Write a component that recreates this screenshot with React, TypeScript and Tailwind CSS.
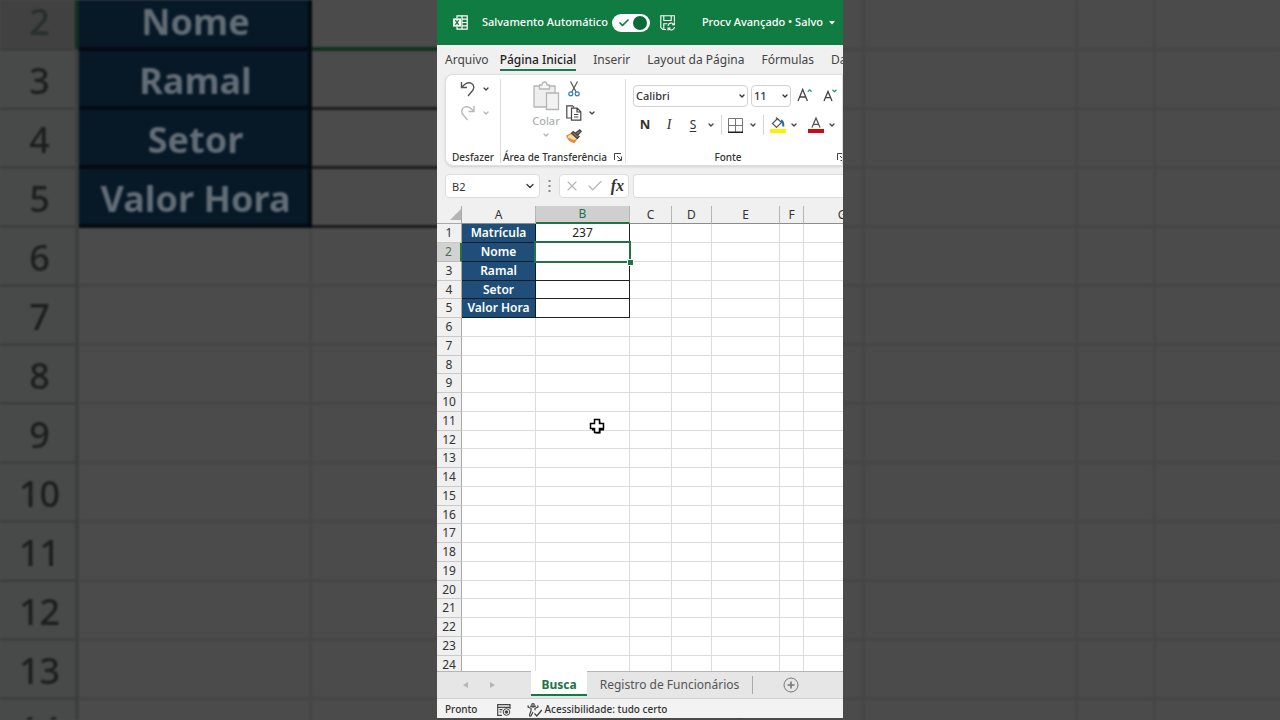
import React from "react";
import { ChevronDown, Check, X } from "lucide-react";

const columns = ["A", "B", "C", "D", "E", "F", "G"];
const labels = ["Matrícula", "Nome", "Ramal", "Setor", "Valor Hora"];
const rows = Array.from({ length: 24 }, (_, i) => i + 1);
const backdropRows = Array.from({ length: 13 }, (_, i) => i + 2);

function Chevron({ light = false, label }: { light?: boolean; label: string }) {
  return (
    <button type="button" aria-label={label} className={light ? "text-[#b5b5b5]" : "text-[#444]"}>
      <ChevronDown size={8} strokeWidth={4} />
    </button>
  );
}

function Launcher({ label }: { label: string }) {
  return (
    <button type="button" aria-label={label} className="shrink-0">
      <svg width="10" height="10" viewBox="0 0 10 10" fill="none" stroke="#444" strokeWidth="1">
        <path d="M1.5 8V1.5H8M4 4l4 4M8.5 4.5v4h-4" />
      </svg>
    </button>
  );
}

function Backdrop() {
  return (
    <div aria-hidden="true" className="col-start-1 row-start-1 h-screen overflow-hidden bg-[#4b4b4b] blur-[1px]">
      <table className="-mt-2 w-[1500px] table-fixed border-separate border-spacing-0 text-[36px] leading-10">
        <colgroup>
          <col className="w-[79px]" />
          <col className="w-[233px]" />
          <col className="w-[298px]" />
          <col className="w-[131px]" />
          <col className="w-[124px]" />
          <col className="w-[213px]" />
          <col className="w-[78px]" />
          <col />
        </colgroup>
        <tbody>
          {backdropRows.map((n) => (
            <tr key={n} className="h-[59px]">
              <th
                className={
                  n === 2
                    ? "border-r-4 border-b-3 border-r-[#10301f] border-b-[#3e3e3e] bg-[#414141] p-0 pt-1 pl-1 font-medium text-[#26302a]"
                    : "border-r-4 border-b-3 border-[#3e3e3e] bg-[#484a4a] p-0 pt-1 pl-1 font-medium text-[#1c1e1e]"
                }
              >
                {n}
              </th>
              {columns.map((c) => {
                if (c === "A" && n <= 5)
                  return (
                    <td key={c} className="border-r-4 border-b-4 border-[#030a12] bg-[#071827] p-0 pt-1 pl-1 text-center font-bold text-[#626d76]">
                      {labels[n - 1]}
                    </td>
                  );
                if (c === "B" && n === 2) return <td key={c} className="border-b-4 border-[#12301f]" />;
                if (c === "B" && n <= 5) return <td key={c} className="border-r-4 border-b-3 border-[#1c1c1c]" />;
                return <td key={c} className="border-r-3 border-b-3 border-[#454545]" />;
              })}
            </tr>
          ))}
        </tbody>
      </table>
    </div>
  );
}

function TitleBar() {
  return (
    <header className="flex h-[45px] shrink-0 items-center bg-[#107c41] pl-4 text-[11px] font-medium text-white">
      <svg width="15" height="15" viewBox="0 0 15 15" fill="none" stroke="white" strokeWidth="1.2" aria-label="Excel" className="shrink-0">
        <path d="M4 3.5V.8h10.2v13.4H4v-2.7M9 .8v13.4M9 4.2h5M9 7.5h5M9 10.8h5" />
        <rect x="0" y="3.4" width="8" height="8.2" fill="white" stroke="none" />
        <path d="M2.3 5.2l3.4 4.6M5.7 5.2L2.3 9.8" stroke="#107c41" strokeWidth="1.3" />
      </svg>
      <label className="ml-3.5 flex shrink-0 items-center whitespace-nowrap">
        Salvamento Automático
        <input type="checkbox" role="switch" defaultChecked className="peer sr-only" />
        <span className="ml-1 flex h-[18px] w-[38px] items-center justify-between rounded-full bg-white px-[3px] pl-1.5 text-[#107c41]">
          <Check size={12} strokeWidth={3.5} />
          <span className="size-3.5 rounded-full bg-[#0b6b37]" />
        </span>
      </label>
      <button type="button" aria-label="Salvar" className="ml-2.5 shrink-0">
        <svg width="16" height="16" viewBox="0 0 16 16" fill="none" stroke="white" strokeWidth="1.1">
          <path d="M6 14.5H2.8L.8 12.6V.8h13.6v6M3.8.8v4.7h7.4V.8M3.8 14V8.8h3.500" />
          <path d="M8 10.8a3.300 3.300 0 0 1 6-1.300M14.500 7.300v2.500H12M14.600 12.200a3.300 3.300 0 0 1-6 1.300M8 15.600v-2.500h2.500" />
        </svg>
      </button>
      <button type="button" className="ml-[26px] flex shrink-0 items-center gap-1.5 whitespace-nowrap">
        Procv Avançado • Salvo
        <svg width="6" height="4" viewBox="0 0 6 4" fill="white"><path d="M0 0h6L3 3.500z" /></svg>
      </button>
    </header>
  );
}

function RibbonTabs() {
  const tabs = ["Arquivo", "Página Inicial", "Inserir", "Layout da Página", "Fórmulas", "Dados"];
  return (
    <nav className="flex h-[29px] shrink-0 items-start gap-[17px] overflow-hidden pt-1.5 pl-2 text-xs text-[#444]">
      {tabs.map((t) => (
        <a
          key={t}
          href="#"
          className={
            t === "Página Inicial"
              ? "-ml-1.5 border-b-2 border-[#1e7a55] leading-[18px] font-medium whitespace-nowrap text-[#222]"
              : "leading-[18px] whitespace-nowrap"
          }
        >
          {t}
        </a>
      ))}
    </nav>
  );
}

function Ribbon() {
  return (
    <section className="ml-2 flex h-[92px] shrink-0 overflow-hidden rounded-l-lg border border-[#dedede] bg-white text-[10px] font-medium text-[#333] shadow-sm">
      <div className="mt-1 mb-0.5 flex w-[55px] shrink-0 flex-col border-r border-[#dcdcdc]">
        <div className="flex flex-1 flex-col gap-2 pt-0.5 pl-3.5">
          <div className="flex items-center gap-1.5">
            <button type="button" aria-label="Desfazer">
              <svg width="16" height="16" viewBox="0 0 16 16" fill="none" stroke="#555" strokeWidth="1.4">
                <path d="M1.500 1v5.500H7M1.800 6.200C5 2.500 8 .8 11 2.200c3.500 1.700 3.600 5.500 1 8L8 15" />
              </svg>
            </button>
            <Chevron label="Opções de desfazer" />
          </div>
          <div className="flex items-center gap-1.5">
            <button type="button" aria-label="Refazer">
              <svg width="16" height="16" viewBox="0 0 16 16" fill="none" stroke="#b9b9b9" strokeWidth="1.400">
                <path d="M14 1v5.500H8.500M13.700 6.200C10.500 2.500 7.500.8 4.500 2.200 1 3.900.9 7.700 3.500 10.200L7.500 15" />
              </svg>
            </button>
            <Chevron light label="Opções de refazer" />
          </div>
        </div>
        <div className="text-center leading-3">Desfazer</div>
      </div>

      <div className="mt-1 mb-0.5 flex w-[125px] shrink-0 flex-col border-r border-[#dcdcdc]">
        <div className="flex flex-1 justify-center gap-1.5 pl-2">
          <div className="flex flex-col items-center pt-0.5 text-[#b0b0b0]">
            <button type="button" className="flex flex-col items-center text-[11px] leading-5">
              <svg width="28" height="30" viewBox="0 0 28 30" fill="#eee" stroke="#b5b5b5" strokeWidth="1.300">
                <path d="M2 5h21v21H2z" />
                <path d="M7.500 8V4h2.500c0-4 5-4 5 0h2.500v4z" fill="#f7f7f7" />
                <path d="M14.500 12h12v16.500h-12z" fill="#f2f2f2" />
              </svg>
              Colar
            </button>
            <Chevron light label="Opções de colar" />
          </div>
          <div className="flex w-9 flex-col gap-2 pt-0.5">
            <button type="button" aria-label="Recortar" className="w-4">
              <svg width="16" height="16" viewBox="0 0 16 16" fill="none" strokeWidth="1.200">
                <path d="M4.500.5l5.800 10.700M11.500.5L5.700 11.200" stroke="#555" />
                <circle cx="4.800" cy="12.800" r="2" stroke="#2f7fc4" />
                <circle cx="11.200" cy="12.800" r="2" stroke="#2f7fc4" />
              </svg>
            </button>
            <div className="flex items-center gap-1.5">
              <button type="button" aria-label="Copiar">
                <svg width="16" height="16" viewBox="0 0 16 16" fill="none" stroke="#444" strokeWidth="1.200">
                  <path d="M5 13H.8V.8h5.700l1.500 1.500" />
                  <path d="M5.500 3.200h5.700l3.600 3.600v8.400H5.500zM11 3.200V7h3.800M8 9.500h4.300M8 12h4.300" />
                </svg>
              </button>
              <Chevron label="Opções de copiar" />
            </div>
            <button type="button" aria-label="Pincel de Formatação" className="w-4">
              <svg width="16" height="14" viewBox="0 0 16 14" fill="none" strokeWidth="1.200">
                <path d="M5.500 4.500L.8 7c1.500 3.500 4 5.700 7.200 6.500l3-4z" fill="#fbd9a8" stroke="#e8862a" />
                <path d="M3 9.500l4.500 3.300 1.300-1.900" fill="#f3a13c" stroke="#e8862a" />
                <path d="M5.500 4.200l1.700-1.700 6 5-1.800 2zM9.300 4.200L13.700.8l1.500 1.500-3.500 4" fill="#777" stroke="#444" />
              </svg>
            </button>
          </div>
        </div>
        <div className="flex items-center justify-between px-0.5 leading-3">
          <span className="whitespace-nowrap">Área de Transferência</span>
          <Launcher label="Área de Transferência" />
        </div>
      </div>

      <div className="mt-1 mb-0.5 flex w-[222px] shrink-0 flex-col">
        <div className="flex flex-1 flex-col gap-2 pt-1.5 pl-[7px]">
          <div className="flex items-center">
            <div className="grid w-[115px] items-center">
              <select aria-label="Fonte" className="col-start-1 row-start-1 h-[22px] appearance-none rounded-sm border border-[#d2d2d2] bg-white pl-0.5 text-[11px]">
                <option>Calibri</option>
              </select>
              <ChevronDown size={8} strokeWidth={4} className="pointer-events-none col-start-1 row-start-1 mr-0.5 justify-self-end" />
            </div>
            <div className="ml-[3px] grid w-10 items-center">
              <select aria-label="Tamanho da fonte" className="col-start-1 row-start-1 h-[22px] appearance-none rounded-sm border border-[#d2d2d2] bg-white pl-0.5 text-[11px]">
                <option>11</option>
              </select>
              <ChevronDown size={8} strokeWidth={4} className="pointer-events-none col-start-1 row-start-1 mr-0.5 justify-self-end" />
            </div>
            <button type="button" aria-label="Aumentar fonte" className="ml-1.5">
              <svg width="16" height="16" viewBox="0 0 16 16" fill="none" strokeWidth="1.300">
                <path d="M1 13L5.700 1.500 10.400 13M2.700 9h6" stroke="#444" />
                <path d="M10.700 3.800l2-2 2 2" stroke="#2a9d73" />
              </svg>
            </button>
            <button type="button" aria-label="Diminuir fonte" className="ml-2.5">
              <svg width="16" height="16" viewBox="0 0 16 16" fill="none" strokeWidth="1.300">
                <path d="M1 13L5 3.500 9 13M2.500 9.700h5" stroke="#444" />
                <path d="M9.500 1.800l2 2 2-2" stroke="#2a9d73" />
              </svg>
            </button>
          </div>
          <div className="flex h-5 items-center">
            <button type="button" aria-label="Negrito" className="w-6 text-[13px] font-bold">N</button>
            <button type="button" aria-label="Itálico" className="w-6 font-['Liberation_Serif',serif] text-sm italic">I</button>
            <button type="button" aria-label="Sublinhado" className="w-6 text-xs font-normal underline underline-offset-2">S</button>
            <span className="ml-0.5 flex"><Chevron label="Opções de sublinhado" /></span>
            <span className="mx-1.5 h-5 w-px bg-[#d5d5d5]" />
            <button type="button" aria-label="Bordas">
              <svg width="15" height="15" viewBox="0 0 15 15" fill="none" stroke="#777">
                <path d="M.5 14V.5h14V14M7.500 1v13M1 7.500h13" />
                <path d="M0 14.200h15" stroke="#222" strokeWidth="1.500" />
              </svg>
            </button>
            <span className="ml-1.5 flex"><Chevron label="Opções de bordas" /></span>
            <span className="mx-1.5 h-5 w-px bg-[#d5d5d5]" />
            <button type="button" aria-label="Cor de preenchimento">
              <svg width="16" height="16" viewBox="0 0 16 16" fill="none">
                <path d="M7.500 1.500L2.500 6.500l4 4 5-5-4-4zM6 .5l2.500 2.500" stroke="#555" strokeWidth="1.200" />
                <path d="M11 3.500c2 .5 2.500 2 2.300 6" stroke="#1b6ba5" strokeWidth="2" />
                <path d="M0 12h16v4H0z" fill="#f8f400" />
              </svg>
            </button>
            <span className="ml-1 flex"><Chevron label="Cores de preenchimento" /></span>
            <button type="button" aria-label="Cor da fonte" className="ml-2.5">
              <svg width="16" height="16" viewBox="0 0 16 16" fill="none">
                <path d="M4 10.500L8 1l4 9.500M5.500 7.300h5" stroke="#555" strokeWidth="1.300" />
                <path d="M0 12h16v4H0z" fill="#d00a10" />
              </svg>
            </button>
            <span className="ml-1 flex"><Chevron label="Cores da fonte" /></span>
          </div>
        </div>
        <div className="flex items-center gap-1.5 pr-0.5 leading-3">
          <span className="flex-1 text-center">Fonte</span>
          <Launcher label="Configurações de fonte" />
        </div>
      </div>
    </section>
  );
}

function FormulaBar() {
  return (
    <section className="flex h-10 shrink-0 items-center pl-2 text-[11px] text-[#333]">
      <div className="grid w-[95px] shrink-0 items-center">
        <input aria-label="Caixa de nome" defaultValue="B2" className="col-start-1 row-start-1 h-6 w-full rounded border border-[#ddd] bg-white pl-1.5" />
        <ChevronDown size={12} strokeWidth={2.5} className="pointer-events-none col-start-1 row-start-1 mr-1 justify-self-end" />
      </div>
      <svg width="3" height="12" viewBox="0 0 3 12" fill="#888" className="mx-2 shrink-0">
        <path d="M.5 0h2v2h-2zM.5 5h2v2h-2zM.5 10h2v2h-2z" />
      </svg>
      <div className="flex h-6 w-[70px] shrink-0 items-center justify-between rounded border border-[#ddd] bg-white px-1">
        <button type="button" aria-label="Cancelar"><X size={16} strokeWidth={1.6} className="text-[#b5b5b5]" /></button>
        <button type="button" aria-label="Inserir"><Check size={18} strokeWidth={1.6} className="text-[#b5b5b5]" /></button>
        <button type="button" aria-label="Inserir função" className="font-['Liberation_Serif',serif] text-base leading-5 font-bold italic">fx</button>
      </div>
      <input aria-label="Barra de fórmulas" className="ml-1 h-6 min-w-0 flex-1 rounded-l border border-r-0 border-[#ddd] bg-white" />
    </section>
  );
}

function Sheet() {
  return (
    <div className="min-h-0 flex-1 overflow-hidden bg-white">
      <table className="w-[444px] table-fixed border-separate border-spacing-0 text-xs leading-4">
        <colgroup>
          <col className="w-[25px]" />
          <col className="w-[74px]" />
          <col className="w-[94px]" />
          <col className="w-[42px]" />
          <col className="w-10" />
          <col className="w-[68px]" />
          <col className="w-6" />
          <col className="w-[77px]" />
        </colgroup>
        <thead>
          <tr className="h-[18px]">
            <th className="border-r border-b border-[#a9a9a9] bg-[#f0f0f0] p-0">
              <svg width="11" height="11" viewBox="0 0 11 11" fill="#b4b4b4" className="ml-auto"><path d="M11 0v11H0z" /></svg>
            </th>
            {columns.map((c) => (
              <th
                key={c}
                className={
                  c === "B"
                    ? "border-r border-b-2 border-r-[#b5b5b5] border-b-[#217346] bg-[#cfcfcf] p-0 font-normal text-[#217346]"
                    : "border-r border-b border-r-[#b5b5b5] border-b-[#8c8c8c] bg-[#f0f0f0] p-0 font-normal text-[#333]"
                }
              >
                {c}
              </th>
            ))}
          </tr>
        </thead>
        <tbody>
          {rows.map((n) => (
            <tr key={n} className={n % 4 === 0 ? "h-[18px]" : "h-[19px]"}>
              <th
                className={
                  n === 2
                    ? "border-r-2 border-b border-r-[#217346] border-b-[#bbb] bg-[#d2d2d2] p-0 font-normal text-[#40705a]"
                    : "border-r border-b border-r-[#a9a9a9] border-b-[#c9c9c9] bg-[#f0f0f0] p-0 font-normal text-[#333]"
                }
              >
                {n}
              </th>
              {columns.map((c) => {
                if (c === "A" && n <= 5)
                  return (
                    <td key={c} className="border-r border-b border-[#0d1c2b] bg-[#1f4e78] p-0 text-center font-semibold whitespace-nowrap text-white">
                      {labels[n - 1]}
                    </td>
                  );
                if (c === "B" && n === 2)
                  return (
                    <td key={c} aria-selected="true" className="relative border-r border-b border-[#222] p-0">
                      <div className="absolute -inset-x-0.5 -top-0.5 -bottom-0.5 border-2 border-[#217346]" />
                      <div className="absolute -right-1 -bottom-1 size-[5px] bg-[#217346] outline outline-white" />
                    </td>
                  );
                if (c === "B" && n <= 5)
                  return (
                    <td key={c} className="border-r border-b border-[#222] p-0 text-center text-[#222]">
                      {n === 1 ? "237" : ""}
                    </td>
                  );
                if (c === "B" && n === 11)
                  return (
                    <td key={c} className="relative border-r border-b border-[#dcdcdc] p-0">
                      <svg width="16" height="16" viewBox="0 0 16 16" fill="white" stroke="black" strokeWidth="1.500" className="absolute top-1.5 left-[53px]">
                        <path d="M6.500 3.500h5v4h3.500v5h-3.500v3h-5v-3H3v-5h3.500z" fill="black" stroke="none" />
                        <path d="M5.500 1.500h5v4h4v5h-4v4h-5v-4h-4v-5h4z" />
                      </svg>
                    </td>
                  );
                return <td key={c} className="border-r border-b border-[#dcdcdc] p-0" />;
              })}
            </tr>
          ))}
        </tbody>
      </table>
    </div>
  );
}

function SheetTabs() {
  return (
    <nav className="flex h-[27px] shrink-0 items-stretch border-t border-[#b5b5b5] bg-[#e6e6e6] text-xs text-[#555]">
      <div className="flex w-[94px] shrink-0 items-center gap-[22px] pl-[26px]">
        <button type="button" aria-label="Planilha anterior">
          <svg width="5" height="6" viewBox="0 0 5 6" fill="#b5b5b5"><path d="M5 0v6L0 3z" /></svg>
        </button>
        <button type="button" aria-label="Próxima planilha">
          <svg width="5" height="6" viewBox="0 0 5 6" fill="#b5b5b5"><path d="M0 0v6l5-3z" /></svg>
        </button>
      </div>
      <a href="#" className="-mt-px mb-0.5 flex w-14 items-center justify-center border-b-2 border-[#107c41] bg-white pt-1 font-bold text-[#217346]">Busca</a>
      <a href="#" className="flex w-[165px] items-center justify-center whitespace-nowrap">Registro de Funcionários</a>
      <span className="my-1 w-px bg-[#aaa]" />
      <button type="button" aria-label="Nova planilha" className="ml-[30px]">
        <svg width="16" height="16" viewBox="0 0 16 16" fill="none" stroke="#777">
          <circle cx="8" cy="8" r="7" />
          <path d="M8 4.500v7M4.500 8h7" strokeWidth="1.600" />
        </svg>
      </button>
    </nav>
  );
}

function StatusBar() {
  return (
    <footer className="flex h-5 shrink-0 items-center border-t border-[#d0d0d0] bg-[#f3f3f3] pt-0.5 pl-2 text-[10px] font-medium text-[#333]">
      Pronto
      <svg width="14" height="12" viewBox="0 0 14 12" fill="none" stroke="#444" className="ml-5">
        <path d="M13 5V.7H.7v10.600H5M.7 3.300H13M2.500 5.700h3M2.500 8h2" strokeWidth="1.200" />
        <circle cx="9.500" cy="8" r="3.300" />
        <circle cx="9.500" cy="8" r="1.300" fill="#444" />
      </svg>
      <button type="button" className="ml-4 flex items-center gap-px whitespace-nowrap">
        <svg width="16" height="14" viewBox="0 0 16 14" fill="none" stroke="#444" strokeWidth="1.200">
          <circle cx="6" cy="2" r="1.300" />
          <path d="M1.500 2.500C.5 3.500 1 4.200 2 4.500l2 .8v2.500L2.500 12c0 1.300 1.200 1.500 1.700.5L6 9M10.500 2.500c1 1 .5 1.700-.5 2L8 5.300v2M3 3l3 1.200L9 3" />
          <path d="M7.500 10.500l2.300 2.500 5-6" strokeWidth="1.300" />
        </svg>
        Acessibilidade: tudo certo
      </button>
    </footer>
  );
}

export default function App() {
  return (
    <div className="grid grid-cols-1 overflow-hidden bg-[#4b4b4b] font-['Noto_Sans',sans-serif]">
      <Backdrop />
      <main className="z-10 col-start-1 row-start-1 mx-auto flex h-screen w-full max-w-[406px] flex-col overflow-hidden pb-0.5">
        <TitleBar />
        <div className="flex min-h-0 flex-1 flex-col bg-[#f0f0f0]">
          <RibbonTabs />
          <Ribbon />
          <FormulaBar />
          <Sheet />
          <SheetTabs />
          <StatusBar />
        </div>
      </main>
    </div>
  );
}
